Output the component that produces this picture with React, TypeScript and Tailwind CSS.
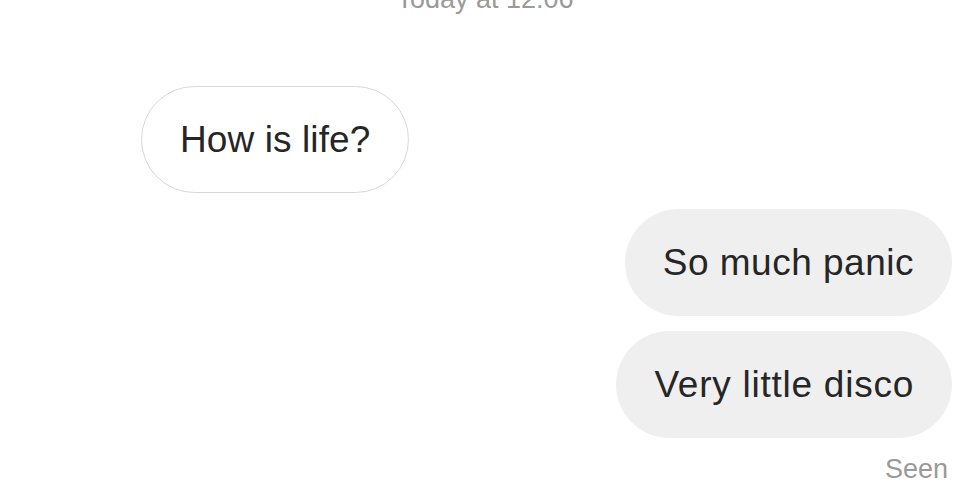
import React from "react";

export default function App() {
  return (
    <div
      className="w-[970px] h-[500px] overflow-hidden bg-white relative"
      style={{ fontFamily: '"Liberation Sans", Arial, sans-serif' }}
    >
      <div className="text-center text-[27px] leading-none text-[#9a9a9a] mt-[-14px]">
        Today at 12:06
      </div>
      <div className="flex flex-col">
        <div className="pl-[141px] mt-[73px]">
          <div className="inline-block rounded-full border-[1.5px] border-[#d8d8d8] bg-white px-[38px] py-[31px] text-[37px] leading-[43px] text-[#262626] tracking-[0.1px]">
            How is life?
          </div>
        </div>
        <div className="flex flex-col items-end pr-[18px] mt-[16px] gap-[15px]">
          <div className="rounded-full bg-[#efefef] px-[38px] py-[32px] text-[37px] leading-[43px] text-[#262626] tracking-[0.5px]">
            So much panic
          </div>
          <div className="rounded-full bg-[#efefef] px-[38px] py-[32px] text-[37px] leading-[43px] text-[#262626] tracking-[0.75px]">
            Very little disco
          </div>
        </div>
        <div className="flex justify-end pr-[22px] mt-[16px]">
          <span className="text-[27px] leading-[30px] text-[#999999]">Seen</span>
        </div>
      </div>
    </div>
  );
}
